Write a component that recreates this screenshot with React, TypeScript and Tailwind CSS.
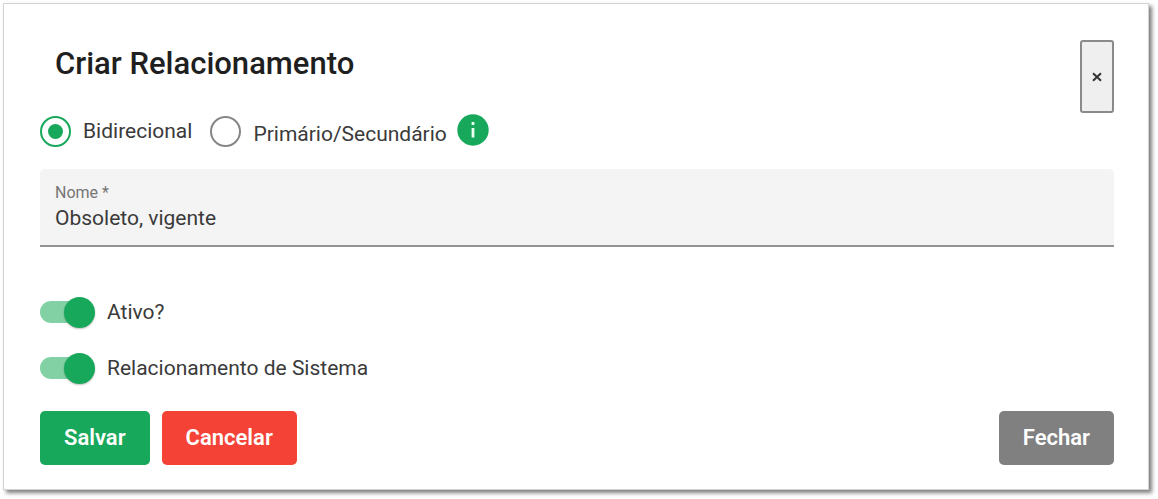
import React, { useState } from 'react';

type ToggleProps = {
  id: string;
  label: string;
  checked: boolean;
  onChange: (checked: boolean) => void;
};

// Slide toggle: the input is the track, the span next to it is the thumb
function Toggle({ id, label, checked, onChange }: ToggleProps) {
  return (
    <label htmlFor={id} className="flex h-8 items-center gap-3 self-start cursor-pointer">
      <span className="relative flex h-[22px] w-[55px] items-center">
        <input
          id={id}
          type="checkbox"
          role="switch"
          checked={checked}
          onChange={(e) => onChange(e.target.checked)}
          className="peer h-[22px] w-[54px] cursor-pointer appearance-none rounded-full bg-gray-300 checked:bg-[#82d1a5]"
        />
        <span className="pointer-events-none absolute left-0 size-[31px] rounded-full bg-white shadow-[0_1px_2px_rgba(0,0,0,0.25)] peer-checked:left-auto peer-checked:right-0 peer-checked:bg-[#18a85b]" />
      </span>
      <span>{label}</span>
    </label>
  );
}

export default function App() {
  const [type, setType] = useState('bidirecional');
  const [name, setName] = useState('Obsoleto, vigente');
  const [active, setActive] = useState(true);
  const [system, setSystem] = useState(true);

  const radioClass =
    'flex size-[31px] shrink-0 cursor-pointer appearance-none items-center justify-center rounded-full border-2 border-[#868686] checked:border-[#18a85b] checked:before:size-[15px] checked:before:rounded-full checked:before:bg-[#18a85b]';
  const buttonClass = 'h-[54px] cursor-pointer rounded-[5px] px-6 text-[22px] font-semibold text-white';

  return (
    <div className="min-h-screen bg-white pt-[3px] pr-[9px] pb-2 pl-[3px] font-['Roboto','Liberation_Sans',sans-serif] text-[21px] leading-7 text-[#3a3a3a]">
      <form
        onSubmit={(e) => e.preventDefault()}
        className="flex flex-col border border-[#d2d2d2] bg-white px-9 pt-9 pb-6 pr-[34px] shadow-[3px_3px_4px_rgba(0,0,0,0.5)]"
      >
        <header className="flex items-start justify-between">
          <h1 className="pt-1 pl-[15px] text-[31px] leading-10 font-medium text-[#1f1f1f]">Criar Relacionamento</h1>
          <button
            type="button"
            aria-label="Close"
            className="flex h-[73px] w-[34px] cursor-pointer items-center justify-center rounded-[3px] border-2 border-[#8a8a8a] bg-[#efefef] text-[#333]"
          >
            <svg width="10" height="10" viewBox="0 0 10 10" fill="none" stroke="currentColor" strokeWidth="2">
              <path d="M1 1.2 9 8.8M9 1.2 1 8.8" />
            </svg>
          </button>
        </header>

        <div role="radiogroup" className="flex h-9 items-center gap-[18px]">
          <label className="flex cursor-pointer items-center gap-3">
            <input
              type="radio"
              name="type"
              checked={type === 'bidirecional'}
              onChange={() => setType('bidirecional')}
              className={radioClass}
            />
            <span>Bidirecional</span>
          </label>
          <label className="flex cursor-pointer items-center gap-3">
            <input
              type="radio"
              name="type"
              checked={type === 'primario'}
              onChange={() => setType('primario')}
              className={radioClass}
            />
            <span className="flex items-center gap-[10px]">
              <span className="pt-[6px]">Primário/Secundário</span>
              <svg width="32" height="32" viewBox="0 0 32 32" className="-mt-[3px]">
                <circle cx="16" cy="16" r="15.7" fill="#18a85b" />
                <path d="M14.6 8h2.8v3h-2.8zM14.6 14h2.8v9.6h-2.8z" fill="#e9fff2" />
              </svg>
            </span>
          </label>
        </div>

        <div className="mt-5 flex h-[78px] flex-col rounded-t-[5px] border-b-2 border-[#929492] bg-[#f4f4f4] px-[15px] pt-[15px]">
          <label htmlFor="name" className="text-base leading-[18px] text-[#757575]">
            Nome *
          </label>
          <input
            id="name"
            type="text"
            required
            value={name}
            onChange={(e) => setName(e.target.value)}
            className="h-8 w-full bg-transparent outline-none"
          />
        </div>

        <div className="mt-[49px] flex flex-col gap-6">
          <Toggle id="active" label="Ativo?" checked={active} onChange={setActive} />
          <Toggle id="system" label="Relacionamento de Sistema" checked={system} onChange={setSystem} />
        </div>

        <div className="mt-[27px] flex flex-wrap gap-3">
          <button type="submit" className={`${buttonClass} bg-[#18a85b]`}>
            Salvar
          </button>
          <button type="button" className={`${buttonClass} bg-[#f44336]`}>
            Cancelar
          </button>
          <button type="button" className={`${buttonClass} ml-auto bg-[#808080]`}>
            Fechar
          </button>
        </div>
      </form>
    </div>
  );
}
